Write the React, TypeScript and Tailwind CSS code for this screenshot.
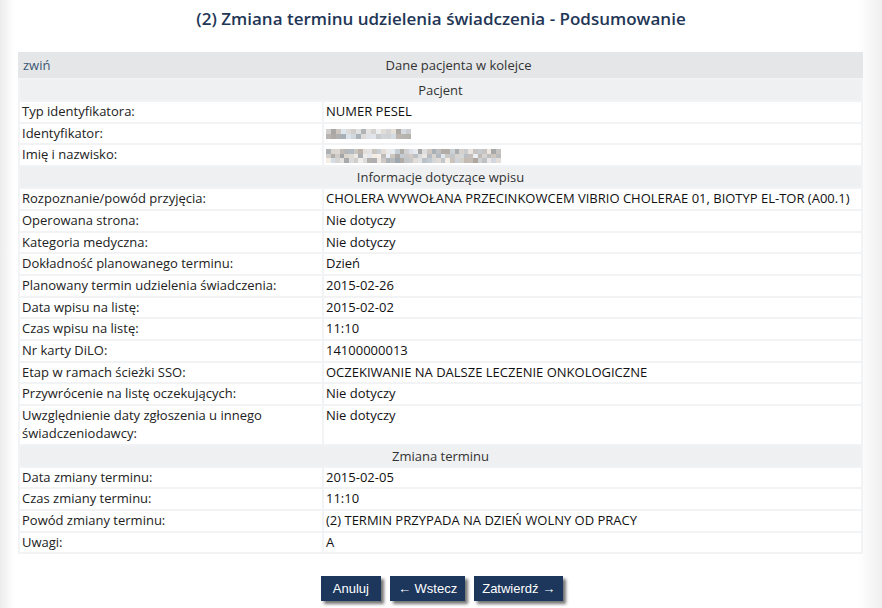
import React from 'react';

type Row =
  | { kind: 'section'; title: string }
  | { kind: 'row'; label: React.ReactNode; value: React.ReactNode };

// pikselowa maska w miejscu danych osobowych
const Mosaic: React.FC<{ cols: number; rows: number; cell: number; seed: number }> = ({ cols, rows, cell, seed }) => {
  const cells = [];
  for (let r = 0; r < rows; r++) {
    for (let c = 0; c < cols; c++) {
      const n = Math.abs(Math.sin((r * 31 + c * 7 + seed) * 12.9898) * 43758.5453) % 1;
      const t = Math.abs(Math.sin((r * 13 + c * 17 + seed) * 78.233) * 12345.678) % 1;
      const base = Math.round(165 + n * 75);
      const tint = Math.round((t - 0.5) * 18);
      cells.push(
        <div
          key={`${r}-${c}`}
          style={{
            width: cell,
            height: cell,
            backgroundColor: `rgb(${base + tint}, ${base}, ${base - tint})`,
          }}
        />
      );
    }
  }
  return (
    <div className="inline-grid align-middle" style={{ gridTemplateColumns: `repeat(${cols}, ${cell}px)` }}>
      {cells}
    </div>
  );
};

const rows: Row[] = [
  { kind: 'section', title: 'Pacjent' },
  { kind: 'row', label: 'Typ identyfikatora:', value: 'NUMER PESEL' },
  { kind: 'row', label: 'Identyfikator:', value: <Mosaic cols={17} rows={2} cell={5} seed={3} /> },
  { kind: 'row', label: 'Imię i nazwisko:', value: <Mosaic cols={38} rows={3} cell={4.6} seed={11} /> },
  { kind: 'section', title: 'Informacje dotyczące wpisu' },
  { kind: 'row', label: 'Rozpoznanie/powód przyjęcia:', value: 'CHOLERA WYWOŁANA PRZECINKOWCEM VIBRIO CHOLERAE 01, BIOTYP EL-TOR (A00.1)' },
  { kind: 'row', label: 'Operowana strona:', value: 'Nie dotyczy' },
  { kind: 'row', label: 'Kategoria medyczna:', value: 'Nie dotyczy' },
  { kind: 'row', label: 'Dokładność planowanego terminu:', value: 'Dzień' },
  { kind: 'row', label: 'Planowany termin udzielenia świadczenia:', value: '2015-02-26' },
  { kind: 'row', label: 'Data wpisu na listę:', value: '2015-02-02' },
  { kind: 'row', label: 'Czas wpisu na listę:', value: '11:10' },
  { kind: 'row', label: 'Nr karty DiLO:', value: '14100000013' },
  { kind: 'row', label: 'Etap w ramach ścieżki SSO:', value: 'OCZEKIWANIE NA DALSZE LECZENIE ONKOLOGICZNE' },
  { kind: 'row', label: 'Przywrócenie na listę oczekujących:', value: 'Nie dotyczy' },
  { kind: 'row', label: <>Uwzględnienie daty zgłoszenia u innego<br />świadczeniodawcy:</>, value: 'Nie dotyczy' },
  { kind: 'section', title: 'Zmiana terminu' },
  { kind: 'row', label: 'Data zmiany terminu:', value: '2015-02-05' },
  { kind: 'row', label: 'Czas zmiany terminu:', value: '11:10' },
  { kind: 'row', label: 'Powód zmiany terminu:', value: '(2) TERMIN PRZYPADA NA DZIEŃ WOLNY OD PRACY' },
  { kind: 'row', label: 'Uwagi:', value: 'A' },
];

const btn =
  "bg-[#1c365c] text-white text-[13px] leading-[25px] h-[25px] font-['Liberation_Sans',Arial,sans-serif] shadow-[3px_3px_3px_rgba(0,0,0,0.55)]";

export default function App() {
  return (
    <div className="min-h-[608px] w-full bg-[linear-gradient(to_right,#ececec_0px,#ffffff_14px,#ffffff_858px,#efefef_882px)] font-['Open_Sans',sans-serif] text-[13px] leading-[17.7px] text-[#222]">
      <h1 className="pt-[7px] text-center text-[17px] font-semibold leading-[24px] text-[#1f3656]">
        (2) Zmiana terminu udzielenia świadczenia - Podsumowanie
      </h1>

      <div className="mx-[18px] mt-[21px] w-[845px]">
        <div className="flex h-[27px] items-center bg-[#e4e6e8]">
          <span className="w-[36px] pl-[5px] text-[#3d5673]">zwiń</span>
          <span className="flex-1 text-center text-[#333]">Dane pacjenta w kolejce</span>
        </div>

        <table className="-mt-px w-[845px] table-fixed border-separate border-spacing-[2px] bg-[#f2f3f4]">
          <colgroup>
            <col className="w-[302px]" />
            <col />
          </colgroup>
          <tbody>
            {rows.map((r, i) =>
              r.kind === 'section' ? (
                <tr key={i}>
                  <td colSpan={2} className="bg-[#eff0f2] py-px text-center leading-[18px] text-[#333]">
                    {r.title}
                  </td>
                </tr>
              ) : (
                <tr key={i}>
                  <td className="bg-white py-px pl-[2px] align-top leading-[17.7px]">{r.label}</td>
                  <td className="bg-white py-px pl-[2px] align-top leading-[17.7px] text-[#111]">{r.value}</td>
                </tr>
              )
            )}
          </tbody>
        </table>
      </div>

      <div className="mt-[22px] flex justify-center gap-[9px] pl-[2px]">
        <button className={`${btn} px-[12px]`}>Anuluj</button>
        <button className={`${btn} px-[8px]`}>← Wstecz</button>
        <button className={`${btn} px-[8px]`}>Zatwierdź →</button>
      </div>
    </div>
  );
}
